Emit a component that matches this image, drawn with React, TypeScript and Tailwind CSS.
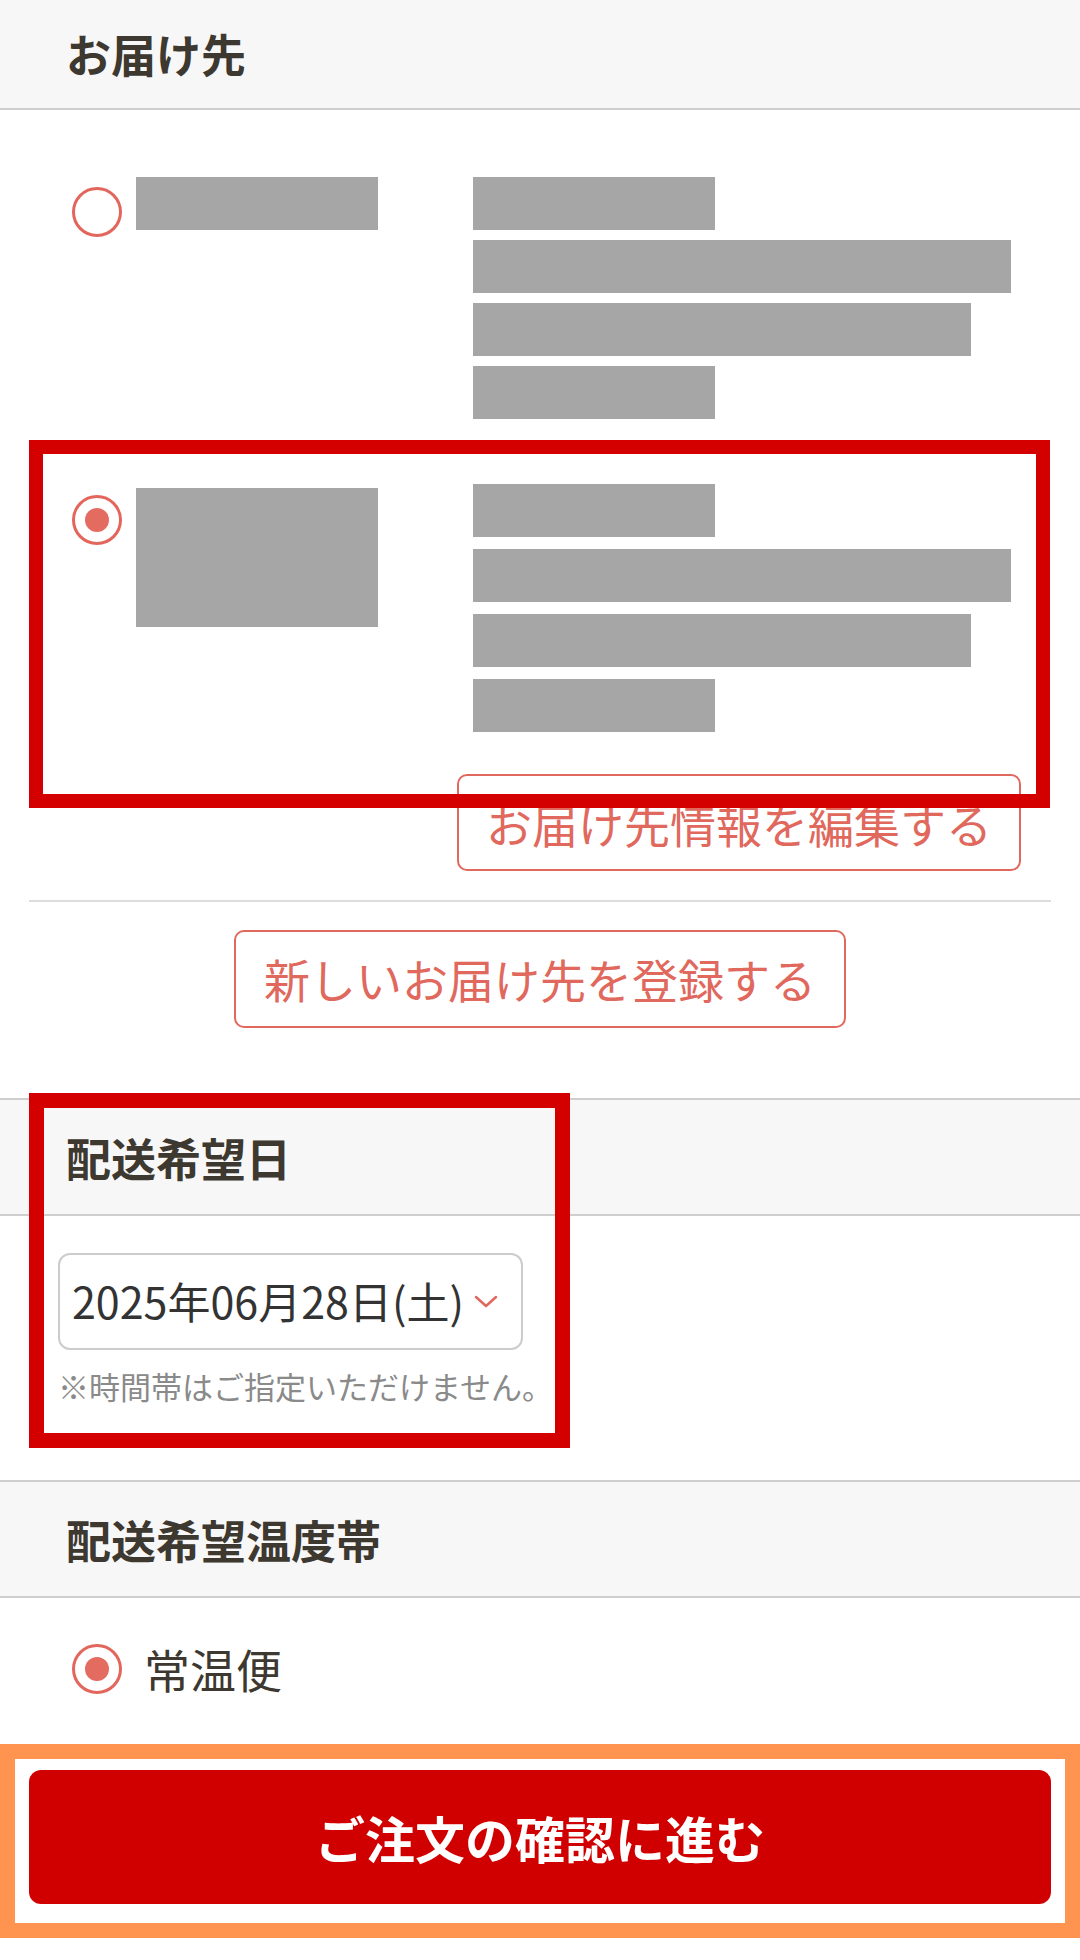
import React from "react";

function Radio({ checked }: { checked?: boolean }) {
  return (
    <div className="w-[50px] h-[50px] rounded-full border-[3px] border-[#e2665c] flex items-center justify-center shrink-0 bg-white">
      {checked && <div className="w-[24px] h-[24px] rounded-full bg-[#e46b5f]" />}
    </div>
  );
}

function Bars({ gap }: { gap: string }) {
  return (
    <div className={`flex flex-col ${gap}`}>
      <div className="w-[242px] h-[53px] bg-[#a6a6a6]" />
      <div className="w-[538px] h-[53px] bg-[#a6a6a6]" />
      <div className="w-[498px] h-[53px] bg-[#a6a6a6]" />
      <div className="w-[242px] h-[53px] bg-[#a6a6a6]" />
    </div>
  );
}

function SectionHeader({ title }: { title: string }) {
  return (
    <div className="h-[118px] bg-[#f7f7f7] border-y-2 border-[#cfcfcf] flex items-center pl-[66px]">
      <span className="text-[45px] font-bold text-[#3d3830] leading-none">{title}</span>
    </div>
  );
}

export default function App() {
  return (
    <div className="relative w-[1080px] h-[1960px] bg-white overflow-hidden font-['Noto_Sans_CJK_JP',sans-serif] text-[#3d3830]">
      {/* お届け先 header */}
      <div className="h-[110px] bg-[#f7f7f7] border-b-2 border-[#cfcfcf] flex items-center pl-[66px]">
        <span className="text-[45px] font-bold leading-none -mt-[2px]">お届け先</span>
      </div>

      {/* address list */}
      <div className="pt-[67px]">
        <div className="flex pl-[72px]">
          <div className="mt-[10px]">
            <Radio />
          </div>
          <div className="ml-[14px] w-[242px] h-[53px] bg-[#a6a6a6]" />
          <div className="ml-[95px]">
            <Bars gap="gap-[10px]" />
          </div>
        </div>

        <div className="flex pl-[72px] mt-[65px]">
          <div className="mt-[11px]">
            <Radio checked />
          </div>
          <div className="ml-[14px] mt-[4px] w-[242px] h-[139px] bg-[#a6a6a6]" />
          <div className="ml-[95px]">
            <Bars gap="gap-[12px]" />
          </div>
        </div>

        <div className="mt-[42px] ml-[457px] w-[564px] h-[97px] rounded-[10px] border-2 border-[#e0685d] flex items-center justify-center">
          <span className="text-[46px] leading-none text-[#e0685d]">お届け先情報を編集する</span>
        </div>

        <div className="mt-[29px] mx-[29px] h-[2px] bg-[#dddddd]" />

        <div className="mt-[28px] mx-auto w-[612px] h-[98px] rounded-[10px] border-2 border-[#e0685d] flex items-center justify-center">
          <span className="text-[46px] leading-none text-[#e0685d] -mt-[2px]">新しいお届け先を登録する</span>
        </div>
      </div>

      {/* 配送希望日 */}
      <div className="mt-[70px]">
        <SectionHeader title="配送希望日" />
        <div className="h-[264px] pt-[37px] pl-[58px]">
          <div className="w-[465px] h-[97px] rounded-[12px] border-2 border-[#cccccc] flex items-center pl-[12px]">
            <span className="text-[43px] leading-none text-[#333333] -mt-[2px]">2025年06月28日(土)</span>
            <svg className="ml-[10px]" width="24" height="14" viewBox="0 0 24 14" fill="none">
              <path d="M2 2 L12 11 L22 2" stroke="#e0685d" strokeWidth="2.5" strokeLinecap="round" strokeLinejoin="round" />
            </svg>
          </div>
          <div className="mt-[20px] text-[31px] leading-[31px] text-[#8a8a8a]">※時間帯はご指定いただけません。</div>
        </div>
      </div>

      {/* 配送希望温度帯 */}
      <SectionHeader title="配送希望温度帯" />
      <div className="h-[146px] pl-[72px] pt-[46px] flex items-start">
        <Radio checked />
        <span className="ml-[22px] text-[46px] leading-[48px]">常温便</span>
      </div>

      {/* submit */}
      <div className="border-[15px] border-[#ff9350] pt-[11px] pb-[19px] px-[14px]">
        <div className="h-[134px] rounded-[12px] bg-[#d10000] flex items-center justify-center">
          <span className="text-[50px] font-bold leading-none text-white">ご注文の確認に進む</span>
        </div>
      </div>

      {/* annotation boxes */}
      <div className="absolute left-[29px] top-[440px] w-[1021px] h-[368px] border-[14px] border-[#d40000] pointer-events-none" />
      <div className="absolute left-[29px] top-[1093px] w-[541px] h-[355px] border-[15px] border-[#d40000] pointer-events-none" />
    </div>
  );
}
